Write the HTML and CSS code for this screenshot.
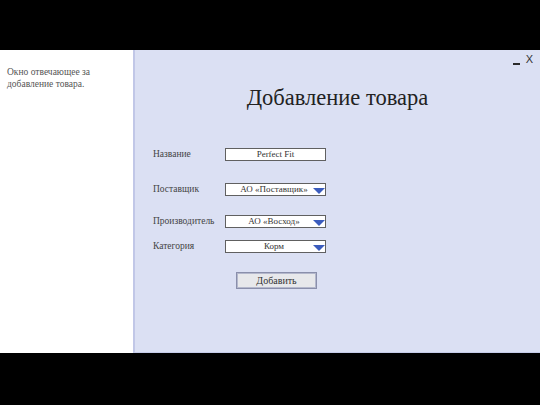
FILE: index.html
```html
<!DOCTYPE html>
<html lang="ru">
<head>
<meta charset="utf-8">
<title>Добавление товара</title>
<link rel="stylesheet" href="styles.css">
</head>
<body>
<div class="screen">
  <div class="bar-top"></div>
  <div class="main">
    <aside class="sidebar">
      <p class="note">Окно отвечающее за добавление товара.</p>
    </aside>
    <section class="window">
      <div class="controls">
        <span class="ctl-min" aria-label="Свернуть"></span>
        <span class="ctl-close">X</span>
      </div>
      <h1 class="title">Добавление товара</h1>
      <div class="form">
        <div class="row row-1">
          <span class="label">Название</span>
          <div class="field">Perfect Fit</div>
        </div>
        <div class="row row-2">
          <span class="label">Поставщик</span>
          <div class="field select">АО «Поставщик»<span class="arrow"></span></div>
        </div>
        <div class="row row-3">
          <span class="label">Производитель</span>
          <div class="field select">АО «Восход»<span class="arrow"></span></div>
        </div>
        <div class="row row-4">
          <span class="label">Категория</span>
          <div class="field select">Корм<span class="arrow"></span></div>
        </div>
        <div class="actions">
          <button class="btn">Добавить</button>
        </div>
      </div>
    </section>
  </div>
  <div class="bar-bottom"></div>
</div>
</body>
</html>
```

FILE: styles.css
```css
* { box-sizing: border-box; }
html, body { margin: 0; padding: 0; }
body {
  width: 540px;
  height: 405px;
  overflow: hidden;
  background: #000;
  font-family: "Liberation Serif", "Times New Roman", serif;
}
.screen {
  display: flex;
  flex-direction: column;
  width: 540px;
  height: 405px;
}
.bar-top { height: 50px; background: #000; flex: none; }
.bar-bottom { flex: 1; background: #000; }
.main {
  display: flex;
  height: 303px;
  flex: none;
}
.sidebar {
  width: 133px;
  background: #fff;
  padding: 16px 6px 0 7px;
  flex: none;
}
.note {
  margin: 0;
  font-size: 9.5px;
  line-height: 12px;
  color: #555;
}
.window {
  flex: 1;
  background: #dbe0f3;
  border-left: 2px solid #c1c7e7;
  border-bottom: 1px solid #c6cce9;
  display: flex;
  flex-direction: column;
}
.controls {
  display: flex;
  justify-content: flex-end;
  align-items: flex-start;
  gap: 6px;
  padding: 3px 7px 0 0;
  height: 15px;
  font-family: "Liberation Sans", Arial, sans-serif;
  font-size: 11px;
  line-height: 13px;
  color: #333;
}
.ctl-min {
  display: block;
  width: 7px;
  height: 2px;
  margin-top: 10px;
  background: #2a2a2a;
}
.title {
  margin: 19px 0 0 0;
  text-align: center;
  font-weight: normal;
  font-size: 22.5px;
  line-height: 27px;
  color: #222;
}
.form {
  margin: 37px 0 0 18px;
  display: flex;
  flex-direction: column;
}
.row {
  display: grid;
  grid-template-columns: 72px 101px;
  align-items: center;
  height: 13px;
}
.row-2 { margin-top: 22px; }
.row-3 { margin-top: 19px; }
.row-4 { margin-top: 12px; }
.label {
  font-size: 9.5px;
  line-height: 12px;
  color: #444;
  white-space: nowrap;
  position: relative;
  top: -1px;
}
.field {
  position: relative;
  height: 13px;
  background: #fff;
  border: 1px solid #606060;
  font-size: 9px;
  line-height: 11px;
  text-align: center;
  color: #333;
  white-space: nowrap;
}
.select { padding-right: 3px; }
.arrow {
  position: absolute;
  right: 0;
  top: 4px;
  width: 0;
  height: 0;
  border-left: 6px solid transparent;
  border-right: 6px solid transparent;
  border-top: 6px solid #3b5cbd;
}
.actions {
  margin: 19px 0 0 83px;
}
.btn {
  display: block;
  width: 81px;
  height: 17px;
  padding: 0;
  background: #e7e8eb;
  border: 1px solid #8a8fab;
  box-shadow: inset 0 0 0 1px #b4b8cc;
  font-family: "Liberation Serif", "Times New Roman", serif;
  font-size: 10px;
  line-height: 15px;
  color: #333;
}
```
